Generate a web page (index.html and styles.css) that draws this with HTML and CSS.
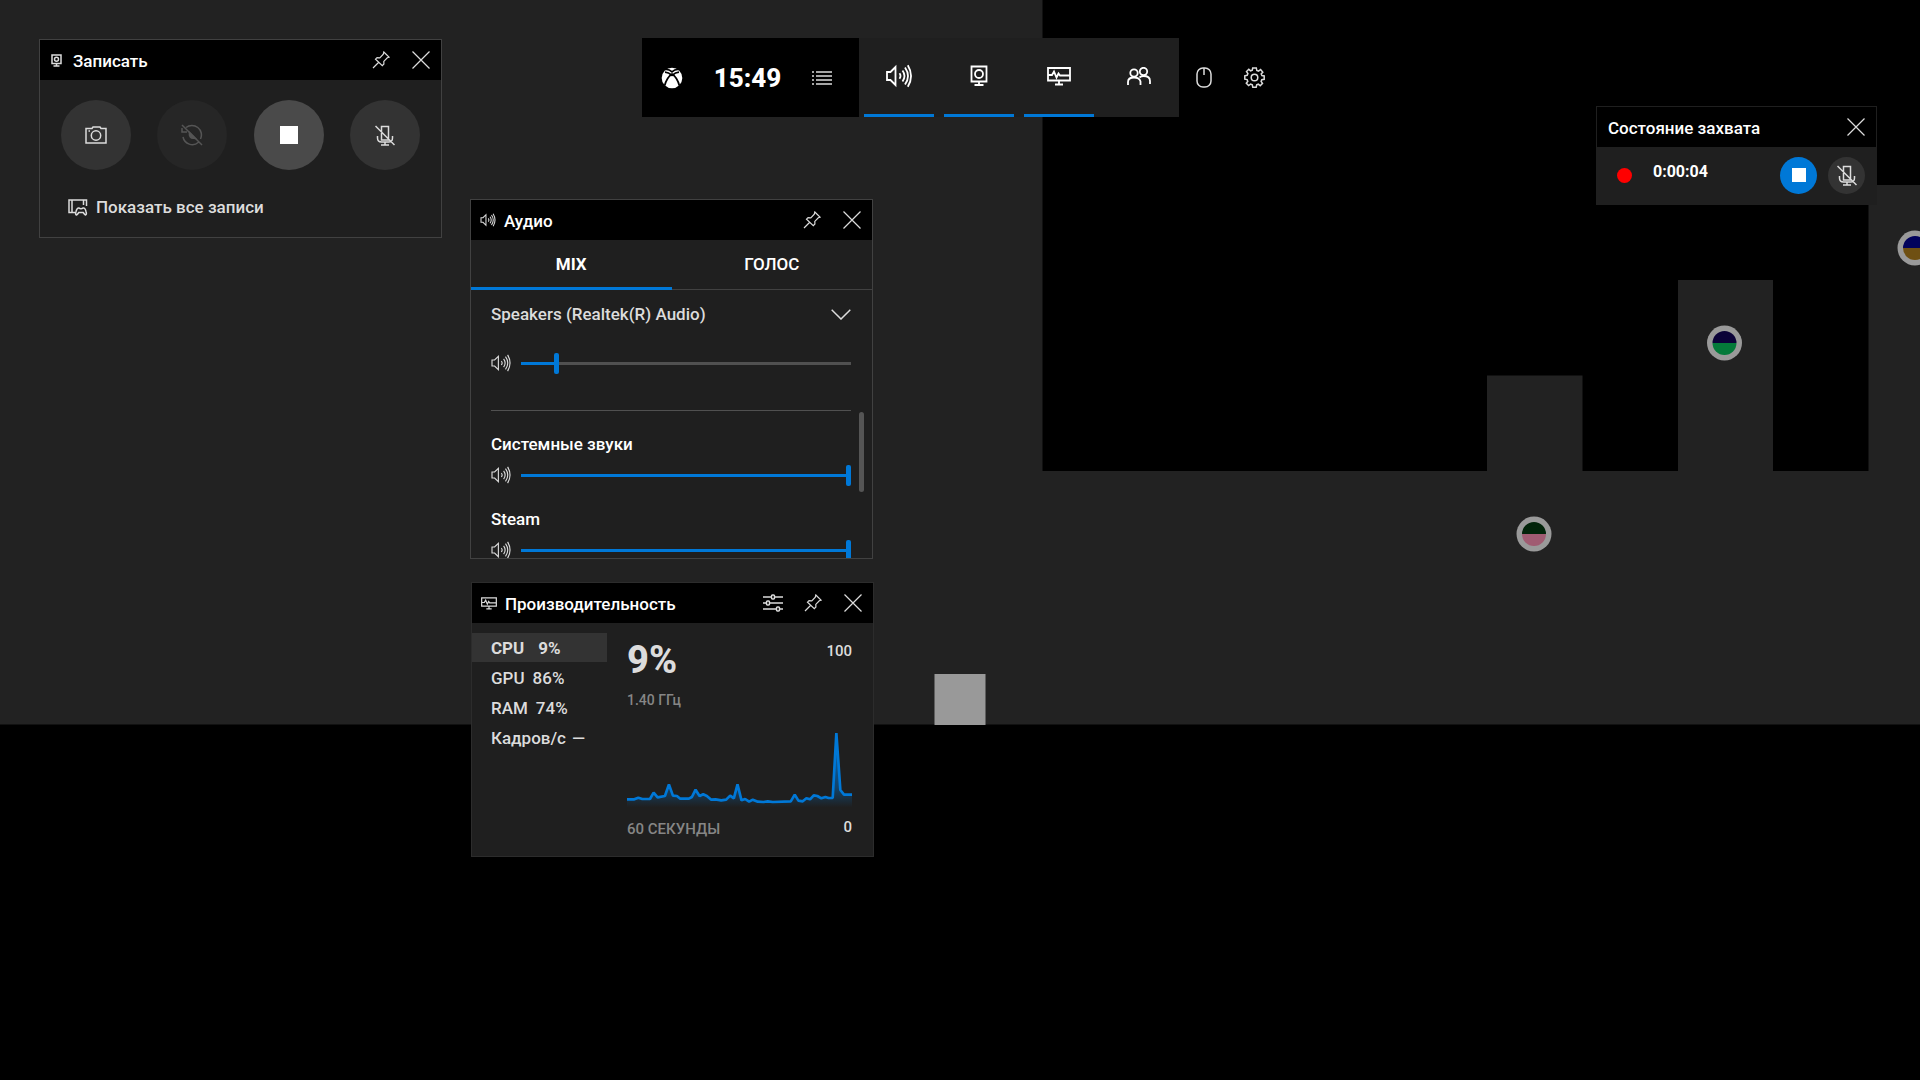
FILE: index.html
```html
<!DOCTYPE html>
<html lang="ru">
<head>
<meta charset="utf-8">
<meta name="viewport" content="width=device-width, initial-scale=1">
<title>Game Bar</title>
<link rel="stylesheet" href="styles.css">
</head>
<body>
<svg class="defs" aria-hidden="true">
  <symbol id="i-close" viewBox="0 0 18 18"><path d="M.5.5l17 17M17.500.5l-17 17"/></symbol>
  <symbol id="i-pin" viewBox="0 0 18 18"><path d="M1 17l5.500-5.500M11.800 1l5.200 5.200-1.700.6-3.500 3.600.1 2.600-1.600 1.700L3.500 8.200l1.600-1.600 2.700.2 3.500-3.700z"/></symbol>
  <symbol id="i-speaker" viewBox="0 0 26 24"><path d="M1 8h3.500L9.500 3v18l-5-5H1z"/><path d="M13.500 9.300q2 2.700 0 5.400M16.500 6.500q4 5.500 0 11M19 3.500q6 8.500 0 17M21.800 1.200q6.500 10.800 0 21.600"/></symbol>
  <symbol id="i-capture" viewBox="0 0 18 22"><path d="M1.500 1.500h15v15h-15zM9 17v3M4.500 20h9"/><circle cx="9" cy="9" r="4"/></symbol>
  <symbol id="i-monitor" viewBox="0 0 24 19"><path d="M1 1h22v12.500H1zM12 14v3M8 17.500h8M1 8h4l2-3.500 2.500 6 2-4L13 8.500h9.500"/></symbol>
  <symbol id="i-micoff" viewBox="0 0 20 21"><path d="M6.500 5V1.500h7V15H6.500V5M2.500 11v2q0 4 4 4h7q4 0 4-4v-2M10 17v3M6 20h8M.5 1l19 19"/></symbol>
</svg>

<svg class="scene" viewBox="0 0 1920 1080" preserveAspectRatio="xMidYMid slice" aria-hidden="true">
  <path class="ground" d="M0 0H1042.500V471H1487V375.500H1582.500V471H1678V280H1773V471H1868.500V185H1920V724.500H0z"/>
  <rect class="player" x="934.500" y="674" width="51" height="51"/>
  <g transform="translate(1534 534)"><circle class="ring" r="17.500"/><path fill="#02240a" d="M-12 0A12 12 0 0 1 12 0z"/><path fill="#a05c72" d="M-12 0A12 12 0 0 0 12 0z"/></g>
  <g transform="translate(1724.500 343)"><circle class="ring" r="17.500"/><path fill="#0b0238" d="M-12 0A12 12 0 0 1 12 0z"/><path fill="#047a3a" d="M-12 0A12 12 0 0 0 12 0z"/></g>
  <g transform="translate(1915 248)"><circle class="ring" r="17.500"/><path fill="#02025c" d="M-12 0A12 12 0 0 1 12 0z"/><path fill="#6f5013" d="M-12 0A12 12 0 0 0 12 0z"/></g>
</svg>

<nav class="bar" aria-label="Game Bar">
  <div class="bar-home">
    <button class="home" aria-label="Xbox"><svg width="22" height="22" viewBox="0 0 22 22"><circle cx="11" cy="11" r="10.300" fill="#fff"/><path d="M4 2.500Q8 2 11 4.800 14 2 18 2.500M4 5.200Q7.500 5.500 11 8.300 14.500 5.500 18 5.200M11 6.800Q5.500 11 3.600 18.800M11 6.800Q16.500 11 18.400 18.800" fill="none" stroke="#000" stroke-width="1.700"/></svg></button>
    <time class="clock">15:49</time>
    <button class="menu" aria-label="Виджеты"><svg class="icon thin" width="20" height="14" viewBox="0 0 20 14"><path d="M0 1h2M4 1h16M0 5h2M4 5h16M0 9h2M4 9h16M0 13h2M4 13h16"/></svg></button>
  </div>
  <div class="bar-widgets">
    <button class="tile on" aria-label="Аудио"><svg class="icon bold" width="28" height="24"><use href="#i-speaker"/></svg></button>
    <button class="tile on" aria-label="Записать"><svg class="icon bold" width="18" height="22"><use href="#i-capture"/></svg></button>
    <button class="tile on" aria-label="Производительность"><svg class="icon bold" width="24" height="19"><use href="#i-monitor"/></svg></button>
    <button class="tile" aria-label="Друзья"><svg class="icon bold" width="24" height="18" viewBox="0 0 24 18"><circle cx="7" cy="6" r="3.700"/><circle cx="16.500" cy="4.500" r="3.700"/><path d="M1 18v-3q0-4.500 6-4.500 5.500 0 6.500 4v3.500M12.500 10.500q1.500-1.500 4-1.500 6.500 0 6.500 5V17"/></svg></button>
  </div>
  <div class="bar-tools">
    <button class="tool" aria-label="Мышь"><svg class="icon mid" width="16" height="21" viewBox="0 0 16 21"><rect x="1" y="1" width="14" height="19" rx="6"/><path d="M8 1v7"/></svg></button>
    <button class="tool" aria-label="Параметры"><svg class="icon mid" width="21" height="21" viewBox="-10.500 -10.500 21 21"><circle r="3.300"/><path d="M-1.800-9.600H1.800L2.300-7.100 4-6.400 6.100-7.900 8.300-5.300 6.700-3.500 7.400-1.900 9.700-1.500V1.800L7.300 2.200 6.600 3.900 8 5.900 5.700 8.200 3.800 6.700 2.200 7.400 1.700 9.700H-1.700L-2.200 7.300-3.900 6.600-5.900 8-8.200 5.700-6.700 3.800-7.400 2.100-9.700 1.700V-1.700L-7.300-2.200-6.600-3.900-8-6-5.700-8.200-3.900-6.700-2.200-7.400z"/></svg></button>
  </div>
</nav>

<section class="widget capture">
  <header class="head">
    <span class="kind"><svg class="icon mid" width="11" height="13" viewBox="0 0 11 13"><path d="M1 1h9v8.500H1zM2.500 12h6M5.500 10v2"/><circle cx="5.500" cy="5.200" r="2"/></svg></span>
    <h2>Записать</h2>
    <button class="act" aria-label="Закрепить"><svg class="icon" width="18" height="18"><use href="#i-pin"/></svg></button>
    <button class="act" aria-label="Закрыть"><svg class="icon" width="18" height="18"><use href="#i-close"/></svg></button>
  </header>
  <div class="rounds">
    <button class="round" aria-label="Снимок экрана"><svg class="icon mid" width="22" height="18" viewBox="0 0 22 18"><path d="M1 2.500h6l1-1.500h7l1 1.500h5V17H1zM3.500 5h1.500"/><circle cx="11" cy="9.500" r="4.700"/></svg></button>
    <button class="round off" disabled aria-label="Записать последнее"><svg class="icon mid" width="22" height="22" viewBox="0 0 22 22"><path d="M5 3.500A9.500 9.500 0 0 1 19.500 15M17.500 18.300A9.500 9.500 0 0 1 2 13M1 1l20 20M1 4v4h5"/><path d="M8.500 8.500l6 6-4-.5q-2.500-1.500-2-5.500z" fill="currentColor"/></svg></button>
    <button class="round live" aria-label="Остановить запись"><span class="stop"></span></button>
    <button class="round" aria-label="Микрофон"><svg class="icon mid" width="20" height="21"><use href="#i-micoff"/></svg></button>
  </div>
  <a class="all" href="#"><svg class="icon mid" width="20" height="17" viewBox="0 0 20 17"><path d="M7 13.500H1V1h17.500v6M4 1v12M15.500 1v5" /><path d="M8.500 16q-1.500-.5-.5-3.500 1-4 3-3.500.7.700 2 .7t2-.7q2-.5 3 3.500 1 3-.5 3.500-1-.5-2.300-2.500h-4.400q-1.300 2-2.300 2.500z"/></svg><span>Показать все записи</span></a>
</section>

<section class="widget audio">
  <header class="head">
    <span class="kind"><svg class="icon bold" width="16" height="14"><use href="#i-speaker"/></svg></span>
    <h2>Аудио</h2>
    <button class="act" aria-label="Закрепить"><svg class="icon" width="18" height="18"><use href="#i-pin"/></svg></button>
    <button class="act" aria-label="Закрыть"><svg class="icon" width="18" height="18"><use href="#i-close"/></svg></button>
  </header>
  <div class="tabs" role="tablist">
    <button class="tab current" role="tab" aria-selected="true">MIX</button>
    <button class="tab" role="tab" aria-selected="false">ГОЛОС</button>
  </div>
  <div class="device">
    <select aria-label="Устройство вывода"><option>Speakers (Realtek(R) Audio)</option></select>
    <svg class="icon mid chevron" width="20" height="11" viewBox="0 0 20 11"><path d="M.7.7L10 10 19.300.7"/></svg>
  </div>
  <div class="level master"><svg class="icon mid" width="20" height="18"><use href="#i-speaker"/></svg><input type="range" value="10" style="--level:10%" aria-label="Громкость устройства"></div>
  <div class="apps">
    <div class="app"><label for="v-system">Системные звуки</label>
      <div class="level"><svg class="icon mid" width="20" height="18"><use href="#i-speaker"/></svg><input id="v-system" type="range" value="100" style="--level:100%"></div></div>
    <div class="app"><label for="v-steam">Steam</label>
      <div class="level"><svg class="icon mid" width="20" height="18"><use href="#i-speaker"/></svg><input id="v-steam" type="range" value="100" style="--level:100%"></div></div>
    <span class="scroll"></span>
  </div>
</section>

<section class="widget perf">
  <header class="head">
    <span class="kind"><svg class="icon bold" width="16" height="13"><use href="#i-monitor"/></svg></span>
    <h2>Производительность</h2>
    <button class="act" aria-label="Параметры"><svg class="icon mid" width="20" height="18" viewBox="0 0 20 18"><path d="M0 3h8M12 3h8M0 9h3M7 9h13M0 15h13M17 15h3"/><rect x="8.500" y="1" width="3" height="4" rx="1"/><rect x="3.500" y="7" width="3" height="4" rx="1"/><rect x="13.500" y="13" width="3" height="4" rx="1"/></svg></button>
    <button class="act" aria-label="Закрепить"><svg class="icon" width="18" height="18"><use href="#i-pin"/></svg></button>
    <button class="act" aria-label="Закрыть"><svg class="icon" width="18" height="18"><use href="#i-close"/></svg></button>
  </header>
  <div class="perf-body">
    <div class="metrics">
      <button class="metric current"><span>CPU</span><span>9%</span></button>
      <button class="metric"><span>GPU</span><span>86%</span></button>
      <button class="metric"><span>RAM</span><span>74%</span></button>
      <button class="metric fps"><span>Кадров/с</span><span>—</span></button>
    </div>
    <div class="detail">
      <div class="row"><strong>9%</strong><span class="scale">100</span></div>
      <p class="freq">1.40 ГГц</p>
      <svg class="chart" viewBox="502 60 676 240" preserveAspectRatio="none" aria-hidden="true">
        <defs><linearGradient id="fade" x1="0" y1="60" x2="0" y2="295" gradientUnits="userSpaceOnUse"><stop offset="0" stop-color="#0078d7"/><stop offset=".75" stop-color="#0078d7" stop-opacity=".4"/><stop offset="1" stop-color="#0078d7" stop-opacity="0"/></linearGradient></defs>
        <path fill="url(#fade)" d="M502 271H524L536 266 548 270 571 270 582 251 594 265 616 261 628 226 640 260 652 261 662 269H688L697 264 708 242 720 261 731 256 742 261 755 272 768 271 785 274 800 272 812 260 823 268 834 226 846 274 857 270 869 278 880 272 895 278 912 279 925 277 940 279 994 277 1006 257 1017 275 1030 277 1041 268 1052 271 1063 259 1074 261 1086 268 1098 264 1108 267 1120 267 1131 72 1143 243 1154 257H1178V300H502z"/>
        <path class="line" d="M502 271H524L536 266 548 270 571 270 582 251 594 265 616 261 628 226 640 260 652 261 662 269H688L697 264 708 242 720 261 731 256 742 261 755 272 768 271 785 274 800 272 812 260 823 268 834 226 846 274 857 270 869 278 880 272 895 278 912 279 925 277 940 279 994 277 1006 257 1017 275 1030 277 1041 268 1052 271 1063 259 1074 261 1086 268 1098 264 1108 267 1120 267 1131 72 1143 243 1154 257H1178"/>
      </svg>
      <div class="row foot"><span class="span">60 СЕКУНДЫ</span><span class="scale">0</span></div>
    </div>
  </div>
</section>

<section class="widget status">
  <header class="head">
    <h2>Состояние захвата</h2>
    <button class="act" aria-label="Закрыть"><svg class="icon" width="18" height="18"><use href="#i-close"/></svg></button>
  </header>
  <div class="status-body">
    <span class="dot"></span>
    <time class="elapsed">0:00:04</time>
    <button class="round small rec" aria-label="Остановить запись"><span class="stop"></span></button>
    <button class="round small" aria-label="Микрофон"><svg class="icon mid" width="20" height="21"><use href="#i-micoff"/></svg></button>
  </div>
</section>
</body>
</html>
```
FILE: styles.css
```css
:root {
  --accent: #0078d7;
  --panel: #1f1f1f;
  --edge: #414141;
  --text: #dcdcdc;
}

* { box-sizing: border-box; }

body {
  margin: 0;
  min-height: 100vh;
  background: #000;
  color: var(--text);
  font: 500 17px/20px Roboto, "Noto Sans", sans-serif;
  overflow: hidden;
}

button, select {
  margin: 0;
  padding: 0;
  border: 0;
  background: none;
  color: inherit;
  font: inherit;
}

button { display: flex; align-items: center; justify-content: center; }
h2, p { margin: 0; font: inherit; }
.defs { position: absolute; width: 0; height: 0; }
.icon { display: block; flex: none; fill: none; stroke: currentColor; stroke-width: 1.200; }
.icon.mid { stroke-width: 1.500; }
.icon.bold { stroke-width: 1.800; }
.icon.thin { stroke-width: 1.300; }

/* Game behind the overlay */
.scene { position: absolute; inset: 0; width: 100%; height: 100%; }
.ground { fill: #222; }
.player { fill: #999; }
.ring { fill: #9a9a9a; }

/* Top bar */
.bar { position: relative; display: flex; justify-content: center; margin-top: 38px; height: 79px; padding-left: 1px; color: #fff; }
.bar-home { display: flex; align-items: center; width: 217px; background: #000; }
.home { width: 60px; height: 79px; }
.clock { flex: 1; padding-left: 8px; text-align: center; font-size: 26px; font-weight: 800; line-height: 32px; }
.menu { width: 74px; height: 79px; color: var(--text); }
.bar-widgets { display: flex; background: var(--panel); }
.tile { width: 80px; border-bottom: 3px solid transparent; }
.tile.on { background: linear-gradient(var(--accent), var(--accent)) center bottom / 70px 3px no-repeat border-box; }
.bar-tools { display: flex; width: 100px; background: #000; color: var(--text); }
.tool { width: 50px; }

/* Widgets */
.widget { position: absolute; width: 403px; background: var(--panel); border: 1px solid var(--edge); }
.head { display: flex; align-items: center; height: 40px; background: #000; color: #fff; }
.head h2 { flex: 1; padding-top: 1px; }
.kind { display: flex; justify-content: center; width: 33px; color: var(--text); }
.act { width: 40px; height: 40px; color: var(--text); }
.round { width: 70px; height: 70px; border-radius: 50%; background: #333; }
.round.off { background: #262626; color: #555; }
.round.live { background: #4a4a4a; }
.stop { width: 18px; height: 18px; background: #fff; }

.capture { left: 39px; top: 39px; height: 199px; }
.rounds { display: flex; justify-content: space-between; padding: 20px 21px 0; }
.all { display: flex; align-items: center; gap: 8px; margin: 25px 0 0 28px; height: 24px; color: inherit; text-decoration: none; }

/* Audio */
.audio { left: 470px; top: 199px; height: 360px; overflow: hidden; }
.tabs { display: flex; height: 50px; border-bottom: 1px solid var(--edge); color: #fff; }
.tab { flex: 1; height: 50px; border-bottom: 3px solid transparent; }
.tab.current { border-color: var(--accent); font-weight: 700; }
.device { display: grid; grid-template-columns: 1fr 20px; align-items: center; height: 48px; padding: 0 21px 0 20px; }
.device select { grid-area: 1 / 1 / 2 / 3; appearance: none; outline: 0; }
.chevron { grid-area: 1 / 2; pointer-events: none; }
.level { display: flex; align-items: center; gap: 10px; height: 22px; padding: 0 21px 0 20px; }
.level.master { margin-top: 14px; }
.level input { flex: 1; min-width: 0; height: 22px; margin: 0; appearance: none; background: linear-gradient(90deg, var(--accent) var(--level), #505050 var(--level)) center / 100% 3px no-repeat; }
.level input::-webkit-slider-thumb { appearance: none; width: 5px; height: 21px; border-radius: 2px; background: var(--accent); }
.apps { position: relative; display: grid; row-gap: 21px; margin-top: 36px; padding-top: 22px; }
.apps::before { content: ""; position: absolute; top: 0; left: 20px; right: 21px; border-top: 1px solid #505050; }
.app { display: grid; row-gap: 8px; color: #fff; }
.app label { padding-left: 20px; line-height: 24px; }
.app .level { color: var(--text); }
.scroll { position: absolute; top: 2px; right: 8px; width: 5px; height: 80px; border-radius: 3px; background: #555; }

/* Performance */
.perf { left: 471px; top: 582px; height: 275px; border-color: #2c2c2c; }
.perf-body { display: grid; grid-template-columns: 135px 1fr; column-gap: 20px; padding-top: 10px; }
.metrics { display: grid; align-content: start; row-gap: 1px; }
.metric { justify-content: flex-start; gap: 8px; height: 29px; padding-left: 19px; }
.metric.current { gap: 14px; background: #333; font-weight: 700; }
.metric.fps { gap: 6px; }
.detail { padding-right: 21px; }
.row { display: flex; justify-content: space-between; }
.row strong { padding-top: 5px; font-size: 38px; line-height: 44px; font-weight: 800; }
.scale { padding-top: 8px; font-size: 15px; }
.freq { padding-top: 8px; color: #868686; font-size: 14px; }
.chart { display: block; width: 100%; height: 80px; margin-top: 19px; }
.line { fill: none; stroke: var(--accent); stroke-width: 8; stroke-linejoin: bevel; }
.foot { align-items: flex-start; }
.foot .span { padding-top: 10px; color: #868686; font-size: 15px; }

/* Capture status */
.status { right: 43px; top: 106px; width: 281px; height: 99px; border-color: #1f1f1f; }
.status h2 { padding-left: 11px; }
.status-body { display: flex; align-items: center; height: 56px; padding: 0 11px 0 20px; }
.dot { width: 15px; height: 15px; border-radius: 50%; background: #f00; }
.elapsed { flex: 1; padding: 0 0 6px 21px; color: #fff; font-size: 16px; font-weight: 700; }
.round.small { width: 37px; height: 37px; margin-left: 11px; }
.round.rec { background: var(--accent); }
.round.rec .stop { width: 14px; height: 14px; }
```
